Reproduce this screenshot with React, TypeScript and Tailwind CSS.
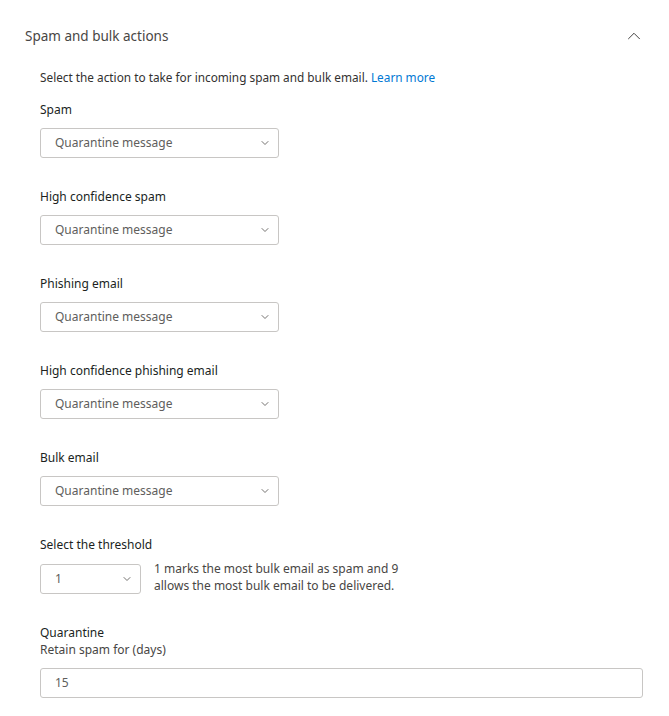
import { ChevronDown, ChevronUp } from "lucide-react";

const actionFields = [
  "Spam",
  "High confidence spam",
  "Phishing email",
  "High confidence phishing email",
  "Bulk email",
];

function FakeSelect({ value, width }: { value: string; width: string }) {
  return (
    <div
      className={`${width} h-[30px] flex items-center justify-between pl-[14px] pr-[7px] border border-[#c8c6c4] rounded-[3px] bg-white text-[12px] text-[#605e5c]`}
    >
      <span>{value}</span>
      <ChevronDown size={12} strokeWidth={1.75} className="text-[#605e5c]" />
    </div>
  );
}

export default function App() {
  return (
    <div
      className="w-[669px] h-[716px] bg-white text-[#201f1e]"
      style={{ fontFamily: '"Noto Sans", "Open Sans", sans-serif' }}
    >
      {/* header */}
      <div className="flex items-center justify-between pl-[25px] pr-[24px] pt-[25px] h-[47px]">
        <span className="text-[13.5px] text-[#484644]">Spam and bulk actions</span>
        <ChevronUp size={22} strokeWidth={1} className="text-[#323130]" />
      </div>

      <div className="pl-[40px] pr-[27px]">
        <p className="mt-[21px] text-[11.8px] leading-[18px] text-[#323130]">
          Select the action to take for incoming spam and bulk email.{" "}
          <span className="text-[#0078d4]">Learn more</span>
        </p>

        {actionFields.map((label, index) => (
          <div key={index} className={index === 0 ? "mt-[15px]" : "mt-[30px]"}>
            <div className="text-[12px] leading-[18px]">{label}</div>
            <div className="mt-[9px]">
              <FakeSelect value="Quarantine message" width="w-[239px]" />
            </div>
          </div>
        ))}

        {/* threshold */}
        <div className="mt-[30px]">
          <div className="text-[12px] leading-[18px]">Select the threshold</div>
          <div className="mt-[10px] flex items-start gap-[13px]">
            <FakeSelect value="1" width="w-[101px]" />
            <p className="text-[12px] leading-[17px] text-[#484644] -mt-[4px]">
              1 marks the most bulk email as spam and 9
              <br />
              allows the most bulk email to be delivered.
            </p>
          </div>
        </div>

        {/* quarantine */}
        <div className="mt-[30px]">
          <div className="text-[12px] leading-[17px]">Quarantine</div>
          <div className="text-[12px] leading-[17px] text-[#484644]">Retain spam for (days)</div>
          <div className="mt-[10px] w-[603px] h-[30px] flex items-center pl-[14px] border border-[#c8c6c4] rounded-[3px] text-[12px] text-[#605e5c]">
            15
          </div>
        </div>
      </div>
    </div>
  );
}
